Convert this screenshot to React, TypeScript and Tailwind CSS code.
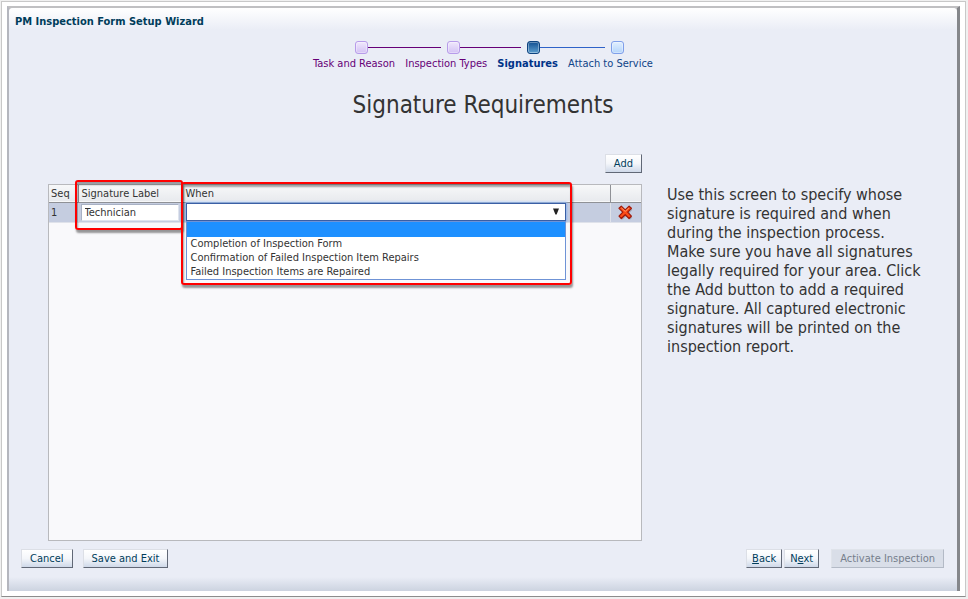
import React from "react";

const steps = [
  { text: "Task and Reason", color: "text-[#660077]" },
  { text: "Inspection Types", color: "text-[#660077]" },
  { text: "Signatures", color: "text-[#003388] font-bold" },
  { text: "Attach to Service", color: "text-[#104488]" },
];

const nodes = [
  {
    box: "border-[#b79bea] from-[#f0e8fc] to-[#d3c2f4]",
    line: "bg-[#660077]",
    width: "w-[92px]",
  },
  {
    box: "border-[#b79bea] from-[#f0e8fc] to-[#d3c2f4]",
    line: "bg-[#660077]",
    width: "w-[80px]",
  },
  {
    box: "border-[#0d4380] from-[#0f4f92] to-[#5d9fce]",
    line: "bg-[#2f62c8]",
    width: "w-[84px]",
  },
  {
    box: "border-[#7f9fea] from-[#e2f0ff] to-[#b4d4fa]",
    line: "",
    width: "w-[13px]",
  },
];

const options = [
  "",
  "Completion of Inspection Form",
  "Confirmation of Failed Inspection Item Repairs",
  "Failed Inspection Items are Repaired",
];

const WizardButton = ({
  children,
  disabled,
  compact,
}: {
  children: React.ReactNode;
  disabled?: boolean;
  compact?: boolean;
}) => {
  return (
    <button
      type="button"
      disabled={disabled}
      className={`h-[19px] border text-[11px] leading-[17px] ${
        disabled
          ? "border-[#dfe3ea] border-r-[#b3bac6] border-b-[#b3bac6] bg-[#d9dee8] text-[#767e8c]"
          : "border-[#dcdfe6] border-r-[#616876] border-b-[#616876] bg-linear-to-b from-white via-[#f4f6fa] to-[#cfd9e9] text-[#003d5b]"
      } ${compact ? "px-[5px]" : "px-[8px]"}`}
    >
      {children}
    </button>
  );
};

const Steps = () => {
  return (
    <nav aria-label="Wizard steps" className="mx-auto w-[340px]">
      <div className="flex pl-[42px]" aria-hidden="true">
        {nodes.map((node, ind) => (
          <div key={ind} className={`flex items-center ${node.width}`}>
            <span
              className={`h-[13px] w-[13px] shrink-0 rounded-[3px] border bg-linear-to-b ${node.box} shadow-[inset_0_0_0_1px_rgba(255,255,255,0.35)]`}
            />
            {node.line && <span className={`mr-[6px] h-px flex-1 ${node.line}`} />}
          </div>
        ))}
      </div>
      <ol className="mt-[3px] flex justify-between text-[11px] leading-[14px] whitespace-nowrap">
        {steps.map((step, ind) => (
          <li key={ind}>
            <a href="#" className={step.color}>
              {step.text}
            </a>
          </li>
        ))}
      </ol>
    </nav>
  );
};

const WhenSelect = () => {
  return (
    <div className="relative mr-[44px]">
      <select
        aria-label="When"
        defaultValue=""
        className="block h-[18px] w-full appearance-none border border-[#3a5fa5] bg-white px-1 text-[11px] shadow-[0_0_2px_1px_#8eb4ee]"
      >
        {options.map((option) => (
          <option key={option}>{option}</option>
        ))}
      </select>
      <svg
        viewBox="0 0 8 7"
        className="pointer-events-none absolute top-[5px] right-[6px] h-[7px] w-[8px]"
        aria-hidden="true"
      >
        <path d="M1 0.5h6L4.6 6.5H3.4z" fill="#222" />
      </svg>
      <ul className="absolute top-[18px] left-0 z-10 w-full border border-[#6f93d6] bg-white text-[11px]">
        {options.map((option) => (
          <li
            key={option}
            className={`px-1 leading-[14px] ${option ? "h-[14px]" : "h-[15px] bg-[#1e90ff]"}`}
          >
            {option}
          </li>
        ))}
      </ul>
    </div>
  );
};

const SignatureTable = () => {
  return (
    <div className="relative min-h-[340px] flex-1 border border-[#b8b9bd] bg-[#f9f9fb]">
      <table className="w-full table-fixed border-collapse text-left text-[11px] leading-[14px] text-[#333]">
        <colgroup>
          <col className="w-[29px]" />
          <col className="w-[104px]" />
          <col />
          <col className="w-[31px]" />
        </colgroup>
        <thead>
          <tr className="h-[17px] border-b border-[#8f9196] bg-linear-to-b from-[#f7f8f9] to-[#e8eaee]">
            <th className="border-r border-[#8f9196] pt-[2px] pl-[2px] font-normal">
              Seq
            </th>
            <th className="border-r border-[#8f9196] pt-[2px] pl-[3px] font-normal">
              Signature Label
            </th>
            <th className="border-r border-[#8f9196] pt-[2px] pl-[3px] font-normal">
              When
            </th>
            <th aria-label="Delete" />
          </tr>
        </thead>
        <tbody>
          <tr className="h-[20px] border-b border-[#dfe2ea] bg-[#c5cde0]">
            <td className="border-r border-[#dfe2ea] pt-[2px] pl-[2px]">1</td>
            <td className="border-r border-[#dfe2ea] pl-[2px]">
              <input
                type="text"
                aria-label="Signature Label"
                defaultValue="Technician"
                className="block h-[17px] w-[98px] border border-[#dfe4ee] border-t-[#a8b1c4] border-l-[#a8b1c4] bg-white px-[3px] pt-px text-[11px]"
              />
            </td>
            <td className="border-r border-[#dfe2ea] pl-[3px]">
              <WhenSelect />
            </td>
            <td>
              <button type="button" aria-label="Delete row" className="mx-auto block">
                <svg viewBox="0 0 15 15" className="h-[15px] w-[15px]">
                  <path
                    d="M4.6 2.4L8.5 6l3.9-3.6 1.9 2.3-3.3 3.8 3.3 4-2 1.9-3.8-3.4-3.9 3.4-2-2 3.4-3.9-3.4-4z"
                    fill="#8d8f9c"
                    opacity="0.6"
                  />
                  <path
                    d="M3.3 1.2L7.2 4.9l3.9-3.7 2.3 2.1-3.7 3.9 3.7 4-2.3 2.3-3.9-3.8-3.9 3.8L1 11.2l3.8-4L1 3.3z"
                    fill="#fb4a16"
                    stroke="#a01808"
                    strokeWidth="1.2"
                    strokeLinejoin="round"
                  />
                  <path d="M3.3 2.8L7.2 6.4l3.9-3.6" fill="none" stroke="#ff9a66" />
                </svg>
              </button>
            </td>
          </tr>
        </tbody>
      </table>

      {/* callout frames */}
      <div className="pointer-events-none absolute top-[-5px] left-[26px] z-20 h-[50px] w-[108px] rounded-[3px] border-2 border-[#ff0000] shadow-[1px_3px_2px_rgba(0,0,0,0.4),inset_1px_3px_2px_rgba(0,0,0,0.35)]" />
      <div className="pointer-events-none absolute top-[-3px] right-[69px] left-[132px] z-20 h-[103px] rounded-[3px] border-2 border-[#ff0000] shadow-[1px_3px_2px_rgba(0,0,0,0.4),inset_1px_3px_2px_rgba(0,0,0,0.35)]" />
    </div>
  );
};

const App = () => {
  return (
    <div className="flex min-h-screen flex-col bg-[#f0f0f0] pt-px pr-[2px] pb-[2px] pl-px font-['DejaVu_Sans_Condensed','Noto_Sans',sans-serif]">
      <div className="flex flex-1 flex-col border border-[#c8c8c8] border-b-[#8c8c8c] bg-white px-[5px] pt-[4px] pb-[5px]">
        <div className="flex flex-1 flex-col border-t-2 border-r-3 border-l-2 border-t-[#c0c0c2] border-r-[#85878b] border-l-[#b4b6be] bg-[#c0c0c2]">
          <main className="flex flex-1 flex-col rounded-t-[4px] bg-[#eaedf6]">
            <h1 className="h-[22px] rounded-t-[4px] bg-linear-to-b from-white to-[#eaedf6] pt-[6px] pl-[6px] text-[11px] leading-[16px] font-bold text-[#003d5b]">
              PM Inspection Form Setup Wizard
            </h1>

            <div className="pt-[11px]">
              <Steps />
            </div>

            <h2 className="mt-[18px] text-center text-[24px] leading-[32px] text-[#333]">
              Signature Requirements
            </h2>

            <div className="mt-[33px] mr-[32px] ml-[39px] flex flex-1 gap-[25px]">
              <div className="flex flex-1 flex-col gap-[11px]">
                <div className="flex justify-end">
                  <WizardButton>Add</WizardButton>
                </div>
                <SignatureTable />
              </div>
              <p className="w-[258px] pt-[31px] text-[16px] leading-[19px] text-[#333]">
                Use this screen to specify whose signature is required and when
                during the inspection process. Make sure you have all signatures
                legally required for your area. Click the Add button to add a
                required signature. All captured electronic signatures will be
                printed on the inspection report.
              </p>
            </div>

            <div className="mt-[8px] flex justify-between pr-[13px] pl-[12px]">
              <div className="flex gap-[10px]">
                <WizardButton>Cancel</WizardButton>
                <WizardButton>Save and Exit</WizardButton>
              </div>
              <div className="flex gap-[12px]">
                <div className="flex gap-[2px]">
                  <WizardButton compact>
                    <u>B</u>ack
                  </WizardButton>
                  <WizardButton compact>
                    N<u>e</u>xt
                  </WizardButton>
                </div>
                <WizardButton disabled>Activate Inspection</WizardButton>
              </div>
            </div>
            <div className="mt-[9px] h-[14px] bg-linear-to-b from-[#eaedf6] to-[#ccd3e0]" />
          </main>
        </div>
      </div>
    </div>
  );
};

export default App;
